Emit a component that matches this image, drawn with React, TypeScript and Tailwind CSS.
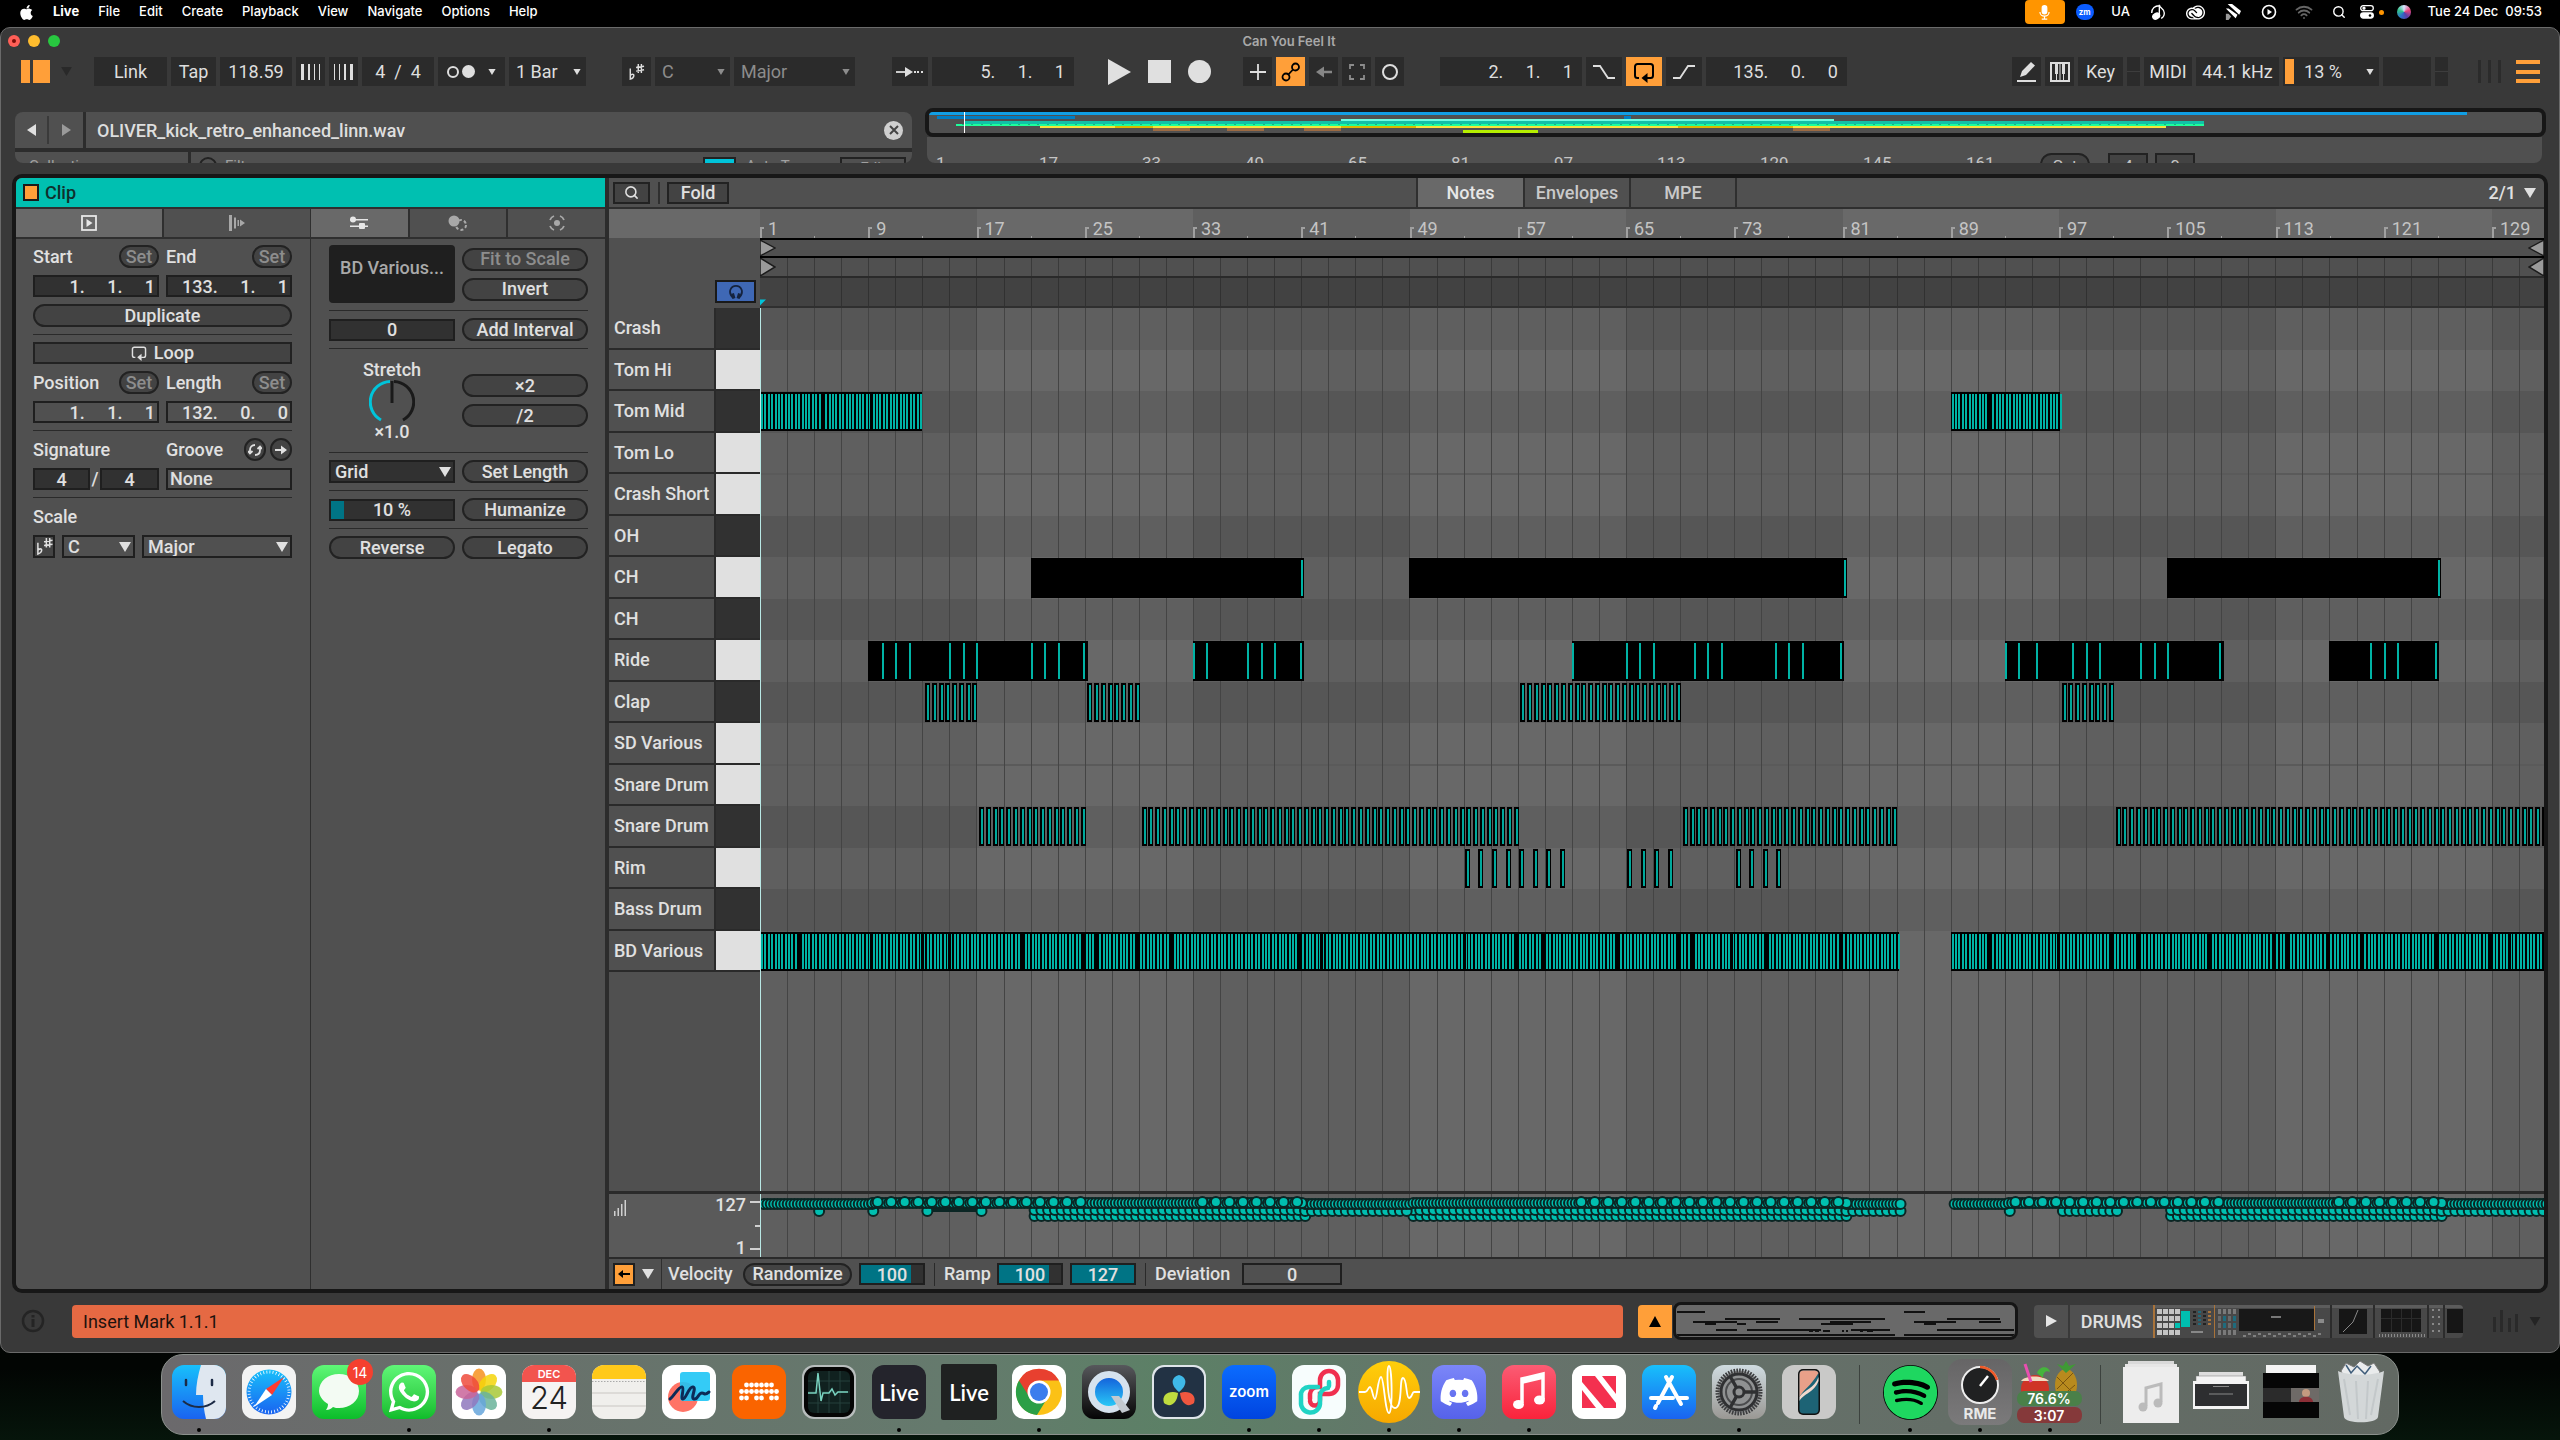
import React from "react";
import { Search, Wifi } from "lucide-react";
import { FaApple, FaDiscord, FaSpotify, FaWhatsapp } from "react-icons/fa";
import { SiAdobecreativecloud } from "react-icons/si";

/* ---------- shared geometry of the piano roll ---------- */

const BAR = 13.53;
const ROLL_W = 1784;
const ROW_H = 41.5;
const TEAL = "#00bfb0";
const barX = (bar: number) => (bar - 1) * BAR;

const PADS = [
  { name: "Crash", white: false },
  { name: "Tom Hi", white: true },
  { name: "Tom Mid", white: false },
  { name: "Tom Lo", white: true },
  { name: "Crash Short", white: true },
  { name: "OH", white: false },
  { name: "CH", white: true },
  { name: "CH", white: false },
  { name: "Ride", white: true },
  { name: "Clap", white: false },
  { name: "SD Various", white: true },
  { name: "Snare Drum", white: true },
  { name: "Snare Drum", white: false },
  { name: "Rim", white: true },
  { name: "Bass Drum", white: false },
  { name: "BD Various", white: true },
];

const BLOCKS = Array.from({ length: 9 }, (_, i) => i);
const LINES = Array.from({ length: 65 }, (_, i) => 1 + (i + 1) * 2);

function Shades({ y, height, light, dark }: { y: number; height: number; light: string; dark: string }) {
  return (
    <>
      {BLOCKS.map((b) => (
        <rect key={b} x={b * 16 * BAR} y={y} width={16 * BAR + 1} height={height} fill={b % 2 ? light : dark} />
      ))}
    </>
  );
}

function GridLines({ height, color = "#444444" }: { height: number; color?: string }) {
  return (
    <>
      {LINES.map((bar) => (
        <rect key={bar} x={Math.round(barX(bar))} y={0} width={1} height={height} fill={color} />
      ))}
    </>
  );
}

function DenseNotes({ row, from, to, gaps = [] }: { row: number; from: number; to: number; gaps?: number[] }) {
  const y = row * ROW_H + 1;
  const notes: number[] = [];
  for (let b = from; b < to - 0.05; b += 0.25) notes.push(b);
  return (
    <g>
      <rect x={barX(from)} y={y} width={(to - from) * BAR} height={39} fill="#000" />
      {notes.map((b) => (
        <rect key={b} x={Math.round(barX(b)) + 1} y={y + 2} width={2} height={35} fill="#00b3a5" />
      ))}
      {gaps.map((b) => (
        <rect key={b} x={Math.round(barX(b)) - 1} y={y} width={3} height={39} fill="#000" />
      ))}
    </g>
  );
}

function SolidNotes({ row, from, to, marks }: { row: number; from: number; to: number; marks: number[] }) {
  const y = row * ROW_H + 1;
  return (
    <g>
      <rect x={barX(from)} y={y} width={(to - from) * BAR + 3} height={40} fill="#000" />
      {marks.map((b) => (
        <rect key={b} x={Math.round(barX(b))} y={y + 2} width={2} height={36} fill="#00b3a5" />
      ))}
    </g>
  );
}

function StepNotes({ row, starts }: { row: number; starts: number[] }) {
  const y = row * ROW_H + 1;
  return (
    <g>
      {starts.map((b) => (
        <g key={b}>
          <rect x={Math.round(barX(b))} y={y} width={5} height={39} fill="#000" />
          <rect x={Math.round(barX(b)) + 2} y={y + 2} width={2} height={35} fill="#00a89b" />
        </g>
      ))}
    </g>
  );
}

const steps = (from: number, to: number, by = 0.5) => {
  const out: number[] = [];
  for (let b = from; b < to - 0.1; b += by) out.push(b);
  return out;
};

const KICK_GAPS_A = [3.9, 9.2, 13, 15, 20.4, 24.9, 25.8, 28.9, 31.4, 40.9, 42.5, 53, 56.9, 58.9, 64.4, 68.9, 69.8, 72.8, 75.4, 80.9];
const KICK_GAPS_B = [91.9, 96.9, 100.9, 102.9, 108.1, 112.9, 113.9, 116.8, 119.3, 124.9, 128.8, 130.3];

function NoteGrid() {
  return (
    <svg className="block h-[664px] w-full" viewBox={`0 0 ${ROLL_W} 664`} preserveAspectRatio="none" shapeRendering="crispEdges">
      {PADS.map((p, i) => (
        <Shades key={i} y={i * ROW_H} height={ROW_H + 1} light={p.white ? "#686868" : "#5f5f5f"} dark={p.white ? "#5f5f5f" : "#565656"} />
      ))}
      <rect x={0} y={4 * ROW_H - 1} width={ROLL_W} height={2} fill="#5a5a5a" />
      <rect x={0} y={11 * ROW_H - 1} width={ROLL_W} height={2} fill="#5a5a5a" />
      <GridLines height={664} />
      <DenseNotes row={2} from={1} to={13} gaps={[5.6, 9.2]} />
      <DenseNotes row={2} from={89} to={97.1} gaps={[91.9]} />
      <SolidNotes row={6} from={21} to={41} marks={[41]} />
      <SolidNotes row={6} from={49} to={81.1} marks={[81.1]} />
      <SolidNotes row={6} from={105} to={125} marks={[125]} />
      <SolidNotes row={8} from={9} to={25} marks={[10, 11, 12, 15, 16, 17, 21, 22, 23, 24.9]} />
      <SolidNotes row={8} from={33} to={41} marks={[33, 34, 37, 38, 39, 40.9]} />
      <SolidNotes row={8} from={61} to={80.9} marks={[61, 65, 66, 67, 70, 71, 72, 76, 77, 78, 80.8]} />
      <SolidNotes row={8} from={93} to={109} marks={[93, 94, 95.3, 98, 99, 100, 103, 104, 105, 108.8]} />
      <SolidNotes row={8} from={117} to={124.9} marks={[120, 121, 122, 124.8]} />
      <StepNotes row={9} starts={steps(13.2, 17)} />
      <StepNotes row={9} starts={steps(25.2, 29)} />
      <StepNotes row={9} starts={steps(57.2, 69)} />
      <StepNotes row={9} starts={steps(97.2, 101)} />
      <StepNotes row={12} starts={steps(17.2, 25)} />
      <StepNotes row={12} starts={steps(29.2, 57)} />
      <StepNotes row={12} starts={steps(69.2, 85)} />
      <StepNotes row={12} starts={steps(101.2, 133)} />
      <StepNotes row={13} starts={steps(53.1, 61, 1)} />
      <StepNotes row={13} starts={steps(65.1, 69, 1)} />
      <StepNotes row={13} starts={steps(73.1, 77, 1)} />
      <DenseNotes row={15} from={1} to={85.2} gaps={KICK_GAPS_A} />
      <DenseNotes row={15} from={89} to={133} gaps={KICK_GAPS_B} />
      <rect x={0} y={0} width={1} height={664} fill="#b9e8e5" />
    </svg>
  );
}

/* ---------- velocity lane ---------- */

function Dots({ from, to, by, cy, r = 5 }: { from: number; to: number; by: number; cy: number; r?: number }) {
  return (
    <>
      {steps(from, to, by).map((b) => (
        <circle key={b} cx={barX(b) + 4} cy={cy} r={r} fill={TEAL} stroke="#0b2624" strokeWidth={2} />
      ))}
    </>
  );
}

function VelocityLane() {
  return (
    <svg className="block h-[63px] w-full" viewBox={`0 0 ${ROLL_W} 63`} preserveAspectRatio="none">
      <Shades y={0} height={63} light="#686868" dark="#5f5f5f" />
      <g shapeRendering="crispEdges">
        <GridLines height={63} />
      </g>
      <Dots from={21} to={41.2} by={0.5} cy={22} r={5} />
      <Dots from={49} to={81.2} by={0.5} cy={22} r={5} />
      <Dots from={105} to={125.2} by={0.5} cy={22} r={5} />
      <Dots from={21} to={41.2} by={0.5} cy={16} r={5} />
      <Dots from={49} to={81.2} by={0.5} cy={16} r={5} />
      <Dots from={105} to={125.2} by={0.5} cy={16} r={5} />
      <Dots from={41} to={49} by={0.5} cy={17} r={5} />
      <Dots from={81} to={85.2} by={0.5} cy={17} r={5} />
      <Dots from={97} to={101.3} by={0.5} cy={17} r={5} />
      <Dots from={125} to={133} by={0.5} cy={17} r={5} />
      <rect x={barX(13.5)} y={13} width={3.5 * BAR} height={5} fill="#0b2624" />
      {[5, 9, 13, 17, 93].map((b) => (
        <circle key={b} cx={barX(b) + 5} cy={17} r={5} fill={TEAL} stroke="#0b2624" strokeWidth={2} />
      ))}
      <Dots from={1} to={9.2} by={0.25} cy={10} />
      <Dots from={41} to={49} by={0.25} cy={10} />
      <Dots from={81} to={85.3} by={0.25} cy={10} />
      <Dots from={89} to={93} by={0.25} cy={10} />
      <Dots from={125} to={133} by={0.25} cy={10} />
      {[
        [9, 41],
        [49, 81.3],
        [93, 125.2],
      ].map(([a, b]) => (
        <Dots key={a} from={a} to={b} by={0.25} cy={9} r={5} />
      ))}
      {[
        [9.4, 25.3],
        [33.4, 41.2],
        [61.4, 81.2],
        [93.5, 109.3],
        [117.4, 125.2],
      ].map(([a, b]) => (
        <Dots key={a} from={a} to={b} by={1} cy={8} r={5} />
      ))}
      <rect x={0} y={0} width={1} height={63} fill="#b9e8e5" />
    </svg>
  );
}

/* ---------- small controls ---------- */

function Pill({ children, dim, className = "" }: { children: React.ReactNode; dim?: boolean; className?: string }) {
  return (
    <button
      className={`flex h-[23px] min-w-0 items-center justify-center rounded-full border-2 border-[#222222] bg-[#434343] leading-none whitespace-nowrap ${dim ? "text-[#8d8d8d]" : "text-[#e0e0e0]"} ${className}`}
    >
      {children}
    </button>
  );
}

function Field({ label, value, className = "" }: { label: string; value: string; className?: string }) {
  return (
    <input
      aria-label={label}
      defaultValue={value}
      className={`h-[22px] min-w-0 border-2 border-[#1f1f1f] leading-none text-[#e0e0e0] outline-none ${className}`}
    />
  );
}

function Triangle({ className = "" }: { className?: string }) {
  return (
    <svg viewBox="0 0 12 10" className={`pointer-events-none ${className}`}>
      <path d="M0 0h12L6 10z" fill="currentColor" />
    </svg>
  );
}

function Choice({ label, value, className = "", box = "" }: { label: string; value: string; className?: string; box?: string }) {
  return (
    <div className={`relative min-w-0 ${box}`}>
      <select aria-label={label} className={`block h-[23px] w-full appearance-none border-2 border-[#1f1f1f] pl-1 leading-none text-[#e0e0e0] outline-none ${className}`}>
        <option>{value}</option>
      </select>
      <Triangle className="absolute top-[7px] right-[4px] h-[10px] w-[12px] text-[#e0e0e0]" />
    </div>
  );
}

const Rule = () => <div className="h-px w-full bg-[#2a2a2a]" />;

function FlatSharp({ className = "" }: { className?: string }) {
  return (
    <svg viewBox="0 0 18 18" className={className} fill="none" stroke="currentColor" strokeWidth={1.6}>
      <path d="M2 5v12c3-1 4-2.500 4-4.200S3.500 11 2 13M11 0v10M14.500 0v10M8.500 4l9-1.500M8.500 8l9-1.500" />
    </svg>
  );
}

function LoopIcon({ className = "" }: { className?: string }) {
  return (
    <svg viewBox="0 0 22 22" className={className} fill="none" stroke="currentColor" strokeWidth={2}>
      <path d="M6 17H4.500A2.500 2.500 0 0 1 2 14.500v-9A2.500 2.500 0 0 1 4.500 3h13A2.500 2.500 0 0 1 20 5.500v9a2.500 2.500 0 0 1-2.500 2.500H14" />
      <path d="M14.500 12v10L8.500 17z" fill="currentColor" stroke="none" />
    </svg>
  );
}

/* ---------- macOS menu bar ---------- */

function MenuBar() {
  return (
    <header className="flex h-[27px] items-start bg-black text-[13px] text-white [font-family:Inter,sans-serif]">
      <nav className="flex h-6 items-center gap-[19px] pl-[19px]">
        <FaApple className="h-[17px] w-[15px]" />
        <b className="font-bold">Live</b>
        {["File", "Edit", "Create", "Playback", "View", "Navigate", "Options", "Help"].map((m) => (
          <a key={m} href="#" className="font-medium">
            {m}
          </a>
        ))}
      </nav>
      <div className="ml-auto flex h-6 items-center">
        <span className="flex h-6 w-10 items-center justify-center rounded bg-[#ff9500]">
          <svg viewBox="0 0 12 16" className="h-[15px] w-[11px]" fill="none" stroke="white" strokeWidth={1.3}>
            <rect x="3.500" y="0.500" width="5" height="9" rx="2.500" fill="white" />
            <path d="M1 7.500a5 4.500 0 0 0 10 0M6 12v3M3 15.300h6" />
          </svg>
        </span>
        <span className="ml-[2px] flex w-9 justify-center">
          <span className="flex h-4 w-[18px] items-center justify-center rounded-full bg-[#0b5cff] text-[8px] font-bold">zm</span>
        </span>
        <span className="w-9 text-center font-medium">UA</span>
        <span className="flex w-[38px] justify-center">
          <svg viewBox="0 0 20 20" className="h-[18px] w-[18px]" fill="none" stroke="white" strokeWidth={1.500}>
            <ellipse cx="8" cy="14.500" rx="4" ry="3" fill="white" transform="rotate(-30 8 14.500)" />
            <path d="M11.500 13V2c0 4 5.500 4 5.500 9 0 3-1.500 5-3.500 6M3 11C3 6 7 3 11 3" />
          </svg>
        </span>
        <span className="flex w-[38px] justify-center">
          <SiAdobecreativecloud className="h-[19px] w-[21px]" />
        </span>
        <span className="flex w-9 justify-center">
          <svg viewBox="0 0 18 18" className="h-4 w-[18px]" fill="white">
            <path d="M3 0h5l10 8-2 4z" />
            <path d="M1 5h3l10 7-2 4z" />
            <path d="M1 11h3l3 3-3 4H1z" opacity=".6" />
          </svg>
        </span>
        <span className="flex w-9 justify-center">
          <svg viewBox="0 0 16 16" className="h-4 w-4" fill="none" stroke="white" strokeWidth={1.600}>
            <circle cx="8" cy="8" r="6.500" />
            <path d="M6.500 5v6L11 8z" fill="white" stroke="none" />
          </svg>
        </span>
        <span className="flex w-[34px] justify-center">
          <Wifi className="h-[18px] w-[18px] text-[#666]" strokeWidth={2.500} />
        </span>
        <span className="flex w-9 justify-center">
          <Search className="h-[14px] w-[14px]" strokeWidth={2.400} />
        </span>
        <span className="flex w-[30px] items-center justify-center gap-[5px]">
          <svg viewBox="0 0 14 14" className="h-[14px] w-[14px]" fill="none" stroke="white" strokeWidth={1.300}>
            <rect x="0.700" y="0.700" width="12.600" height="5" rx="2.500" />
            <circle cx="4" cy="3.200" r="1" fill="white" />
            <rect x="0.700" y="8" width="12.600" height="5" rx="2.500" fill="white" />
            <circle cx="10" cy="10.500" r="1.300" fill="black" stroke="none" />
          </svg>
          <i className="h-[5px] w-[5px] rounded-full bg-[#ff9500]" />
        </span>
        <span className="flex w-[34px] justify-center">
          <i className="h-[14px] w-[14px] rounded-full bg-[conic-gradient(#d6e4ff,#e8467c,#5b3ea8,#2a72c8,#35c48d,#d6e4ff)]" />
        </span>
        <time className="pr-[18px] pl-[7px] font-medium whitespace-pre">Tue 24 Dec  09:53</time>
      </div>
    </header>
  );
}

/* ---------- transport ---------- */

const cell = "flex h-[29px] items-center justify-center bg-[#2b2b2b] text-[#dedede] whitespace-pre";

function Bars({ widths }: { widths: number[] }) {
  return (
    <span className="flex h-4 items-stretch gap-[4px]">
      {widths.map((w, i) => (
        <i key={i} className="bg-[#dedede]" style={{ width: w }} />
      ))}
    </span>
  );
}

function ToolSelect({ label, value, box, dim }: { label: string; value: string; box: string; dim?: boolean }) {
  return (
    <div className={`relative ${box}`}>
      <select aria-label={label} className={`block h-[29px] w-full appearance-none bg-[#2b2b2b] pl-[7px] outline-none ${dim ? "text-[#8c8c8c]" : "text-[#dedede]"}`}>
        <option>{value}</option>
      </select>
      <Triangle className={`absolute top-[12px] right-[5px] h-[6px] w-[8px] ${dim ? "text-[#8c8c8c]" : "text-[#dedede]"}`} />
    </div>
  );
}

function Transport() {
  const stroke = { fill: "none", stroke: "currentColor", strokeWidth: 1.8 };
  return (
    <div className="flex h-[29px] items-center pr-[19px] pl-[20px] text-[18px]">
      <button aria-label="Browser" className="flex h-[23px] w-[29px] gap-[3px]">
        <i className="w-[9px] bg-[#ff9f39]" />
        <i className="flex-1 bg-[#ff9f39]" />
      </button>
      <Triangle className="ml-[11px] h-[9px] w-[11px] text-[#292929]" />
      <div className="ml-[22px] flex gap-1">
        <button className={`${cell} w-[73px]`}>Link</button>
        <button className={`${cell} w-[45px]`}>Tap</button>
        <input aria-label="Tempo" defaultValue="118.59" className="h-[29px] w-[72px] bg-[#2b2b2b] text-center text-[#dedede]" />
        <button aria-label="Nudge down" className={`${cell} w-[29px]`}>
          <Bars widths={[3, 2, 1, 1]} />
        </button>
        <button aria-label="Nudge up" className={`${cell} w-[29px]`}>
          <Bars widths={[1, 1, 2, 3]} />
        </button>
        <input aria-label="Time signature" defaultValue="4  /  4" className="h-[29px] w-[72px] bg-[#2b2b2b] text-center text-[#dedede]" />
        <button aria-label="Metronome" className={`${cell} w-[67px] gap-[3px]`}>
          <i className="h-[12px] w-[12px] rounded-full border-2 border-[#dedede]" />
          <i className="h-[13px] w-[13px] rounded-full bg-[#dedede]" />
          <Triangle className="ml-[10px] h-[6px] w-[8px]" />
        </button>
        <ToolSelect label="Quantization" value="1 Bar" box="w-[77px]" />
      </div>
      <div className="ml-[36px] flex gap-1">
        <button aria-label="Scale mode" className={`${cell} w-[29px]`}>
          <FlatSharp className="h-4 w-[17px]" />
        </button>
        <ToolSelect label="Root note" value="C" box="w-[75px]" dim />
        <ToolSelect label="Scale name" value="Major" box="w-[121px]" dim />
      </div>
      <div className="ml-[37px] flex items-center gap-1">
        <button aria-label="Follow" className={`${cell} w-[36px]`}>
          <svg viewBox="0 0 28 14" className="h-[14px] w-7">
            <path d="M0 7h10" {...stroke} />
            <path d="M9 2l8 5-8 5z" fill="currentColor" />
            <path d="M18 7h2M21 7h2M25 7h2" {...stroke} />
          </svg>
        </button>
        <input aria-label="Arrangement position" defaultValue="5.     1.     1" className="h-[29px] w-[142px] bg-[#2b2b2b] pr-[9px] text-right text-[#dedede]" />
        <button aria-label="Play" className="ml-[30px]">
          <svg viewBox="0 0 23 26" className="h-[26px] w-[23px]">
            <path d="M0 0l23 13L0 26z" fill="#e0e0e0" />
          </svg>
        </button>
        <button aria-label="Stop" className="ml-[13px] h-[23px] w-[23px] bg-[#e0e0e0]" />
        <button aria-label="Record" className="ml-[13px] h-[23px] w-[23px] rounded-full bg-[#e0e0e0]" />
      </div>
      <div className="ml-[32px] flex gap-1">
        <button aria-label="Overdub" className={`${cell} w-[29px]`}>
          <svg viewBox="0 0 16 16" className="h-4 w-4">
            <path d="M8 0v16M0 8h16" {...stroke} />
          </svg>
        </button>
        <button aria-label="Automation arm" className="flex h-[29px] w-[29px] items-center justify-center bg-[#ff9f39] text-black">
          <svg viewBox="0 0 20 20" className="h-5 w-5">
            <circle cx="14.500" cy="5" r="3.500" {...stroke} />
            <circle cx="5" cy="15" r="3.500" {...stroke} />
            <path d="M12 7.500l-4.600 5" {...stroke} />
          </svg>
        </button>
        <button aria-label="Re-enable automation" className={`${cell} w-[29px]`}>
          <svg viewBox="0 0 16 12" className="h-3 w-4 text-[#868686]">
            <path d="M0 6l8-5.500v11z" fill="currentColor" />
            <path d="M6 6h10" stroke="currentColor" strokeWidth={2.500} />
          </svg>
        </button>
        <button aria-label="Capture" className={`${cell} w-[29px]`}>
          <svg viewBox="0 0 16 16" className="h-4 w-4 text-[#8c8c8c]">
            <path d="M1 5V1h4M11 1h4v4M15 11v4h-4M5 15H1v-4" {...stroke} />
          </svg>
        </button>
        <button aria-label="Session record" className={`${cell} w-[29px]`}>
          <i className="h-4 w-4 rounded-full border-2 border-[#dedede]" />
        </button>
      </div>
      <div className="ml-[36px] flex gap-1">
        <input aria-label="Loop start" defaultValue="2.     1.     1" className="h-[29px] w-[142px] bg-[#2b2b2b] pr-[9px] text-right text-[#dedede]" />
        <button aria-label="Punch in" className={`${cell} w-[36px]`}>
          <svg viewBox="0 0 24 14" className="h-[14px] w-6">
            <path d="M1 1h7l8 12h7" {...stroke} />
          </svg>
        </button>
        <button aria-label="Loop switch" className="flex h-[29px] w-[36px] items-center justify-center bg-[#ff9f39] text-black">
          <LoopIcon className="h-[22px] w-6" />
        </button>
        <button aria-label="Punch out" className={`${cell} w-[36px]`}>
          <svg viewBox="0 0 24 14" className="h-[14px] w-6">
            <path d="M1 13h7l8-12h7" {...stroke} />
          </svg>
        </button>
        <input aria-label="Loop length" defaultValue="135.     0.     0" className="h-[29px] w-[141px] bg-[#2b2b2b] pr-[9px] text-right text-[#dedede]" />
      </div>
      <div className="ml-auto flex gap-1">
        <button aria-label="Draw mode" className={`${cell} w-[29px]`}>
          <svg viewBox="0 0 20 20" className="h-5 w-5" fill="currentColor">
            <path d="M3 15l2-6 9-9 4 3.500-9 9.500zM0 18h19v2H0z" />
          </svg>
        </button>
        <button aria-label="Computer MIDI keyboard" className={`${cell} w-[29px]`}>
          <svg viewBox="0 0 20 20" className="h-5 w-5">
            <rect x="1" y="1" width="18" height="18" fill="none" stroke="currentColor" strokeWidth={2} />
            <path d="M5 1h3v11H5zM12 1h3v11h-3z" fill="currentColor" />
            <path d="M6.500 12v7M13.500 12v7M10 1v18" stroke="currentColor" />
          </svg>
        </button>
        <button className={`${cell} w-[45px]`}>Key</button>
        <span className={`${cell} w-[13px] flex-col`}>
          <i className="h-px w-full bg-[#3d3d3d]" />
        </span>
        <button className={`${cell} w-[48px]`}>MIDI</button>
        <button className={`${cell} w-[83px]`}>44.1 kHz</button>
        <div className={`${cell} relative w-[96px] pr-4`}>
          <i className="absolute top-[2px] left-[2px] h-[25px] w-[9px] bg-[#ff9f39]" />
          13 %
          <Triangle className="absolute top-[12px] right-[5px] h-[6px] w-[8px]" />
        </div>
        <span className={`${cell} w-[48px]`} />
        <span className={`${cell} w-[13px] flex-col`}>
          <i className="h-px w-full bg-[#3d3d3d]" />
        </span>
      </div>
      <div className="ml-[30px] flex h-[23px] gap-[7px]">
        <i className="w-[3px] bg-[#2b2b2b]" />
        <i className="w-[3px] bg-[#2b2b2b]" />
        <i className="w-[3px] bg-[#2b2b2b]" />
      </div>
      <button aria-label="Views" className="ml-[15px] flex h-[23px] w-[24px] flex-col justify-between">
        <i className="h-1 w-full bg-[#ff9f39]" />
        <i className="h-1 w-full bg-[#ff9f39]" />
        <i className="h-1 w-full bg-[#ff9f39]" />
      </button>
    </div>
  );
}

/* ---------- browser strip and arrangement overview ---------- */

function BrowserStrip() {
  return (
    <section className="mt-[4px] h-[51px] w-[897px] shrink-0 overflow-hidden rounded-lg bg-[#505050] text-[18px]">
      <div className="flex h-[40px] items-center border-b-4 border-[#2c2c2c]">
        <div className="flex h-full items-center border-r-3 border-[#2c2c2c]">
          <button aria-label="Back" className="flex h-7 w-[34px] items-center justify-center border-r-2 border-[#3a3a3a]">
            <svg viewBox="0 0 9 12" className="h-3 w-[9px]">
              <path d="M9 0v12L0 6z" fill="#e0e0e0" />
            </svg>
          </button>
          <button aria-label="Forward" className="flex w-[34px] justify-center">
            <svg viewBox="0 0 9 12" className="h-3 w-[9px]">
              <path d="M0 0v12l9-6z" fill="#9a9a9a" />
            </svg>
          </button>
        </div>
        <input aria-label="Search browser" defaultValue="OLIVER_kick_retro_enhanced_linn.wav" className="h-full flex-1 bg-transparent pl-[11px] font-medium text-[#dedede] outline-none" />
        <button aria-label="Clear search" className="mr-[9px] flex h-[19px] w-[19px] items-center justify-center rounded-full bg-[#cfcfcf]">
          <svg viewBox="0 0 10 10" className="h-[10px] w-[10px]">
            <path d="M1 1l8 8M9 1L1 9" stroke="#444" strokeWidth={2} />
          </svg>
        </button>
      </div>
      <div className="flex text-[15px] leading-[18px] text-[#a0a0a0]">
        <span className="w-[173px] pt-[5px] pl-[14px]">Collections</span>
        <span className="h-5 w-[3px] bg-[#2c2c2c]" />
        <i className="mt-[5px] ml-[8px] h-[18px] w-[18px] rounded-full border-2 border-[#222222]" />
        <span className="pt-[5px] pl-[8px]">Filters</span>
        <i className="mt-[5px] ml-auto h-5 w-[33px] border-2 border-[#222222] bg-[#00c4da]" />
        <span className="w-[104px] pt-[5px] pl-[10px]">Auto Tags</span>
        <span className="mt-[5px] mr-[6px] h-5 w-[66px] border-2 border-[#222222] text-center">Edit</span>
      </div>
    </section>
  );
}

function Overview() {
  const clip = (x1: number, x2: number, y: number, h: number, fill: string) => (
    <rect key={`${x1}-${y}`} x={x1 - 929} y={y} width={x2 - x1} height={h} fill={fill} />
  );
  return (
    <section className="ml-[13px] min-w-0 flex-1">
      <div className="h-[29px] overflow-hidden rounded-lg border-4 border-[#171717] bg-[#505050]">
        <svg className="block h-[21px] w-full" viewBox="0 0 1614 21" preserveAspectRatio="none" shapeRendering="crispEdges">
          {clip(929, 2468, 0, 3, "#119ee4")}
          {clip(937, 1075, 4, 3, "#007ec4")}
          {clip(1624, 1631, 4, 3, "#007ec4")}
          {clip(965, 2205, 9, 3, "#12c0a8")}
          {clip(1341, 1835, 7, 2, "#6dfce0")}
          {clip(956, 2205, 12, 2, "#1cff9c")}
          {Array.from({ length: 132 }, (_, i) => clip(962 + i * 9.4, 964 + i * 9.4, 12, 1, "#16b97c"))}
          {clip(1040, 2167, 14, 2, "#f7e33b")}
          {clip(1115, 1153, 14, 2, "#d9b800")}
          {clip(1341, 1416, 14, 2, "#d9b800")}
          {clip(1678, 1794, 14, 2, "#d9b800")}
          {[1153, 1227, 1304, 1794].map((x) => clip(x, x + 37, 16, 3, "#9c6a43"))}
          {clip(1463, 1538, 18, 3, "#b6ef00")}
          {clip(964, 965, 0, 21, "#ffffff")}
        </svg>
      </div>
      <div className="mr-1 ml-[2px] flex h-[26px] overflow-hidden rounded-b-lg bg-[#505050] pt-[15px] text-[17px] leading-[22px] text-[#c4c4c4]">
        <span className="flex shrink-0 pl-[9px]">
          {["1", "17", "33", "49", "65", "81", "97", "113", "129", "145"].map((n) => (
            <span key={n} className="w-[103px]">
              {n}
            </span>
          ))}
          <span className="w-[74px]">161</span>
        </span>
        <span className="mt-px h-[23px] w-[50px] shrink-0 rounded-full border-2 border-[#222222] bg-[#434343] text-center">Set</span>
        <span className="mt-px ml-[18px] h-[23px] w-[40px] shrink-0 border-2 border-[#222222] bg-[#434343] text-center">4</span>
        <span className="mt-px ml-[7px] h-[23px] w-[40px] shrink-0 border-2 border-[#222222] bg-[#434343] text-center">0</span>
      </div>
    </section>
  );
}

/* ---------- clip panels ---------- */

const tab = "flex h-7 flex-1 items-center justify-center";
const inv = "bg-[#505050] text-[#a8a8a8]";
const act = "bg-[#696969] text-[#e6e6e6]";

function PairLabels({ a, b }: { a: string; b: string }) {
  return (
    <div className="flex gap-[7px] leading-none">
      {[a, b].map((t) => (
        <div key={t} className="flex h-[23px] w-[126px] items-center justify-between">
          {t}
          <Pill dim className="w-[40px]">
            Set
          </Pill>
        </div>
      ))}
    </div>
  );
}

function ClipColumn() {
  return (
    <div className="flex w-[294px] shrink-0 flex-col">
      <div className="flex gap-[2px] border-b-2 border-[#2f2f2f] bg-[#2f2f2f]">
        <button aria-label="Clip content" className={`${tab} ${act}`}>
          <svg viewBox="0 0 16 16" className="h-4 w-4">
            <rect x="1" y="1" width="14" height="14" fill="none" stroke="currentColor" strokeWidth={1.800} />
            <path d="M5.500 4v8l6-4z" fill="currentColor" />
          </svg>
        </button>
        <button aria-label="Launch" className={`${tab} ${inv}`}>
          <svg viewBox="0 0 16 16" className="h-4 w-4" fill="currentColor">
            <path d="M0 0h3v16H0zM5 2.500h2v11H5zM8.500 5h1.500v6H8.500zM11 4.500v7L16 8z" />
          </svg>
        </button>
      </div>
      <div className="flex flex-col gap-[7px] pt-[6px] pr-[18px] pl-[17px]">
        <PairLabels a="Start" b="End" />
        <div className="flex gap-[7px]">
          <Field label="Start" value="1.     1.     1" className="w-[126px] bg-[#313131] pr-[2px] text-right" />
          <Field label="End" value="133.     1.     1" className="w-[126px] bg-[#313131] pr-[2px] text-right" />
        </div>
        <Pill className="w-full">Duplicate</Pill>
        <Rule />
        <button className="flex h-[22px] items-center justify-center gap-[7px] border-2 border-[#222222] bg-[#434343] leading-none">
          <LoopIcon className="h-4 w-4" />
          Loop
        </button>
        <PairLabels a="Position" b="Length" />
        <div className="flex gap-[7px]">
          <Field label="Position" value="1.     1.     1" className="w-[126px] bg-[#505050] pr-[2px] text-right" />
          <Field label="Length" value="132.     0.     0" className="w-[126px] bg-[#505050] pr-[2px] text-right" />
        </div>
        <Rule />
        <div className="flex h-[23px] items-center leading-none">
          <span className="w-[133px]">Signature</span>
          <span className="flex-1">Groove</span>
          <button aria-label="Hot-swap groove" className="mr-1 flex h-[23px] w-[22px] items-center justify-center rounded-full border-2 border-[#222222] bg-[#434343]">
            <svg viewBox="0 0 14 14" className="h-[14px] w-[14px]" fill="none" stroke="currentColor" strokeWidth={1.800}>
              <path d="M7 2C4 2 2 4 2 7v2M7 12c3 0 5-2 5-5V5M0 8l2 2.500L4.500 8M9.500 6L12 3.500 14 6" />
            </svg>
          </button>
          <button aria-label="Commit groove" className="flex h-[23px] w-[22px] items-center justify-center rounded-full border-2 border-[#222222] bg-[#434343]">
            <svg viewBox="0 0 12 12" className="h-3 w-3" fill="currentColor">
              <path d="M0 5h6V1.500L12 6l-6 4.500V7H0z" />
            </svg>
          </button>
        </div>
        <div className="flex items-center">
          <Field label="Signature numerator" value="4" className="w-[57px] bg-[#313131] text-center" />
          <span className="w-[10px] text-center leading-none">/</span>
          <Field label="Signature denominator" value="4" className="w-[59px] bg-[#313131] text-center" />
          <select aria-label="Groove" className="ml-[7px] block h-[22px] w-[126px] appearance-none border-2 border-[#1f1f1f] bg-[#505050] pl-[2px] leading-none">
            <option>None</option>
          </select>
        </div>
        <Rule />
        <div className="flex h-[23px] items-center leading-none">Scale</div>
        <div className="flex gap-[7px]">
          <button aria-label="Scale highlight" className="flex h-[23px] w-[22px] items-center justify-center border-2 border-[#1f1f1f] bg-[#434343]">
            <FlatSharp className="h-[17px] w-[17px]" />
          </button>
          <Choice label="Root" value="C" box="w-[73px]" className="bg-[#505050]" />
          <Choice label="Scale" value="Major" box="flex-1" className="bg-[#505050]" />
        </div>
      </div>
    </div>
  );
}

const pair = "grid grid-cols-2 items-center gap-[7px]";

function ToolsColumn() {
  return (
    <div className="flex min-w-0 flex-1 flex-col">
      <div className="flex gap-[2px] border-b-2 border-[#2f2f2f] bg-[#2f2f2f]">
        <button aria-label="Pitch and time" className={`${tab} ${act}`}>
          <svg viewBox="0 0 18 14" className="h-[14px] w-[18px]" fill="currentColor">
            <path d="M0 3h18v1.500H0zM0 9.500h18V11H0z" />
            <circle cx="3" cy="3.500" r="3" />
            <rect x="9" y="7" width="6" height="6" rx="1" />
          </svg>
        </button>
        <button aria-label="Transform" className={`${tab} ${inv}`}>
          <svg viewBox="0 0 20 16" className="h-4 w-5">
            <circle cx="6" cy="6" r="5.500" fill="currentColor" />
            <circle cx="13" cy="10" r="5" fill="none" stroke="currentColor" strokeWidth={2} strokeDasharray="3 2.200" />
          </svg>
        </button>
        <button aria-label="Generate" className={`${tab} ${inv}`}>
          <svg viewBox="0 0 16 16" className="h-4 w-4" fill="none" stroke="currentColor" strokeWidth={1.800}>
            <circle cx="8" cy="8" r="3" fill="currentColor" stroke="none" />
            <path d="M1 5a7 7 0 0 1 4-4M11 1a7 7 0 0 1 4 4M15 11a7 7 0 0 1-4 4M5 15a7 7 0 0 1-4-4" />
          </svg>
        </button>
      </div>
      <div className="flex flex-col gap-[7px] pt-[6px] pr-[17px] pl-[18px]">
        <div className={pair}>
          <div className="flex h-[58px] items-center justify-center rounded bg-[#1f1f1f] pb-[12px] leading-none text-[#a9a9a9]">BD Various...</div>
          <div className="flex flex-col gap-[7px]">
            <Pill dim>Fit to Scale</Pill>
            <Pill>Invert</Pill>
          </div>
        </div>
        <Rule />
        <div className={pair}>
          <Field label="Interval" value="0" className="bg-[#313131] text-center" />
          <Pill>Add Interval</Pill>
        </div>
        <Rule />
        <div className={`${pair} h-[89px]`}>
          <div className="flex flex-col items-center leading-none">
            Stretch
            <svg viewBox="0 0 46 44" className="h-[44px] w-[46px]" fill="none" strokeWidth={3}>
              <path d="M12 41A20.500 20.500 0 0 1 21 2.500" stroke="#00c4da" />
              <path d="M25 2.500A20.500 20.500 0 0 1 34 41" stroke="#1a1a1a" />
              <path d="M23 2v22" stroke="#1a1a1a" />
            </svg>
            ×1.0
          </div>
          <div className="flex flex-col gap-[7px]">
            <Pill>×2</Pill>
            <Pill>/2</Pill>
          </div>
        </div>
        <Rule />
        <div className={pair}>
          <Choice label="Quantize to" value="Grid" className="bg-[#313131]" />
          <Pill>Set Length</Pill>
        </div>
        <Rule />
        <div className={pair}>
          <Field label="Humanize amount" value="10 %" className="bg-[linear-gradient(90deg,#007485_13px,#313131_13px)] text-center" />
          <Pill>Humanize</Pill>
        </div>
        <Rule />
        <div className={pair}>
          <Pill>Reverse</Pill>
          <Pill>Legato</Pill>
        </div>
      </div>
    </div>
  );
}

/* ---------- piano roll ---------- */

function LaneMarker({ flip }: { flip?: boolean }) {
  return (
    <svg viewBox="0 0 16 18" className={`relative h-full w-4 ${flip ? "-scale-x-100" : ""}`} preserveAspectRatio="none">
      <path d="M0 0l15 9-15 9z" fill="#9a9a9a" stroke="#1b1b1b" strokeWidth={1.500} />
    </svg>
  );
}

function ThinGrid({ height, line }: { height: number; line: string }) {
  return (
    <svg className="absolute inset-0 h-full w-full" viewBox={`0 0 ${ROLL_W} ${height}`} preserveAspectRatio="none" shapeRendering="crispEdges">
      <GridLines height={height} color={line} />
    </svg>
  );
}

function PianoRoll() {
  return (
    <section className="flex min-w-0 flex-1 flex-col">
      <div className="flex h-[31px] items-center border-b-2 border-[#2f2f2f] bg-[#505050]">
        <div className="flex flex-1 items-center">
          <button aria-label="Find notes" className="ml-1 flex h-[22px] w-[37px] items-center justify-center border-2 border-[#222222] bg-[#434343]">
            <Search className="h-[15px] w-[15px]" strokeWidth={2.500} />
          </button>
          <i className="ml-2 h-[22px] w-[2px] bg-[#2f2f2f]" />
          <button className="ml-[7px] h-[22px] w-[62px] border-2 border-[#222222] bg-[#434343] leading-none">Fold</button>
        </div>
        <div role="tablist" className="flex h-full border-x-2 border-[#2f2f2f]">
          <button role="tab" aria-selected="true" className="w-[105px] bg-[#696969] text-[#e6e6e6]">
            Notes
          </button>
          <button role="tab" className="w-[106px] border-l-2 border-[#2f2f2f] text-[#c9c9c9]">
            Envelopes
          </button>
          <button role="tab" className="w-[106px] border-l-2 border-[#2f2f2f] text-[#c9c9c9]">
            MPE
          </button>
        </div>
        <div className="flex flex-1 justify-end">
          <button className="flex items-center gap-2 pr-2">
            2/1
            <Triangle className="h-[10px] w-[12px]" />
          </button>
        </div>
      </div>

      {/* ruler */}
      <div className="flex h-[29px] bg-[#696969] text-[18px] font-normal text-[#c4c4c4]">
        <div className="w-[151px] shrink-0" />
        <div className="flex min-w-0 flex-1 overflow-hidden">
          {Array.from({ length: 17 }, (_, i) => (
            <div key={i} className={`relative flex w-[6.068%] shrink-0 items-end last:shrink ${Math.floor(i / 2) % 2 ? "bg-[#696969]" : "bg-[#5f5f5f]"}`}>
              <i className="h-[11px] w-1 shrink-0 border-t-2 border-l-2 border-[#a0a0a0]" />
              <span className="pl-1 leading-[19px]">{1 + i * 8}</span>
              {i < 16 && <i className="absolute bottom-0 left-1/2 h-[2px] w-px bg-[#a0a0a0]" />}
            </div>
          ))}
        </div>
      </div>

      {/* loop brace, markers and scrub strip */}
      <div className="flex h-[70px]">
        <div className="flex w-[151px] shrink-0 items-end justify-end bg-[#505050] pr-1 pb-[5px]">
          <button aria-label="Preview notes" className="flex h-[23px] w-[41px] items-center justify-center border-2 border-[#1a1a1a] bg-[#3f68b5]">
            <svg viewBox="0 0 16 16" className="h-4 w-4" fill="none" stroke="#15233f" strokeWidth={1.800}>
              <path d="M5.500 14C2 11 1.500 8 2.500 5.500a6 6 0 0 1 11 0C14.500 8 14 11 10.500 14" />
              <path d="M4.500 9.500l1.500 5M11.500 9.500l-1.500 5" strokeWidth={3} />
            </svg>
          </button>
        </div>
        <div className="flex min-w-0 flex-1 flex-col">
          <div className="flex h-[20px] justify-between border-y-2 border-black bg-[#505050]">
            <LaneMarker />
            <LaneMarker flip />
          </div>
          <div className="relative flex h-[20px] justify-between border-b-2 border-[#2a2a2a] bg-[#505050]">
            <ThinGrid height={20} line="#3a3a3a" />
            <LaneMarker />
            <LaneMarker flip />
          </div>
          <div className="relative flex flex-1 items-end border-b-2 border-[#2f2f2f] bg-[#424242]">
            <ThinGrid height={28} line="#313131" />
            <svg viewBox="0 0 6 6" className="relative h-[7px] w-[6px]">
              <path d="M0 0h6L0 6z" fill="#00c4da" />
            </svg>
          </div>
        </div>
      </div>

      {/* pads and notes */}
      <div className="flex h-[664px]">
        <ul className="flex w-[151px] shrink-0 flex-col">
          {PADS.map((p, i) => (
            <li key={i} className="flex flex-1 border-b-2 border-[#2a2a2a]">
              <span className="flex w-[107px] items-center border-r-2 border-[#2a2a2a] bg-[#505050] pl-[5px] whitespace-nowrap">{p.name}</span>
              <span className={`flex-1 ${p.white ? "bg-[#e0e0e0]" : "bg-[#313131]"}`} />
            </li>
          ))}
        </ul>
        <div className="min-w-0 flex-1">
          <NoteGrid />
        </div>
      </div>

      {/* empty octave range */}
      <div className="flex min-h-[40px] flex-1">
        <div className="w-[151px] shrink-0 bg-[#505050]" />
        <div className="relative min-w-0 flex-1">
          <svg className="absolute inset-0 h-full w-full" viewBox={`0 0 ${ROLL_W} 100`} preserveAspectRatio="none" shapeRendering="crispEdges">
            <Shades y={0} height={100} light="#686868" dark="#5f5f5f" />
            <GridLines height={100} />
            <rect x={0} y={0} width={1} height={100} fill="#b9e8e5" />
          </svg>
        </div>
      </div>

      {/* velocity lane */}
      <div className="flex h-[68px] border-t-3 border-b-2 border-[#2a2a2a]">
        <div className="flex w-[151px] shrink-0 bg-[#5a5a5a] pl-[5px] leading-none">
          <svg viewBox="0 0 12 16" className="mt-[6px] h-4 w-3" fill="#d0d0d0">
            <path d="M0 11h1.500v5H0zM3.500 8H5v8H3.500zM7 4h1.500v12H7zM10.500 0H12v16h-1.500z" />
          </svg>
          <div className="ml-auto flex flex-col justify-between pt-[2px] pr-1 text-right">
            <span>127</span>
            <span>1</span>
          </div>
          <div className="flex flex-col items-end justify-between py-[7px]">
            <i className="h-[2px] w-[10px] bg-[#d0d0d0]" />
            <i className="h-[2px] w-[5px] bg-[#d0d0d0]" />
            <i className="h-[2px] w-[10px] bg-[#d0d0d0]" />
          </div>
        </div>
        <div className="min-w-0 flex-1">
          <VelocityLane />
        </div>
      </div>

      {/* velocity tools */}
      <div className="flex h-[30px] items-center bg-[#505050] pl-1 leading-none">
        <button aria-label="Show lane" className="flex h-[23px] w-[22px] items-center justify-center border-2 border-[#1f1f1f] bg-[#ff9f39]">
          <svg viewBox="0 0 12 8" className="h-2 w-3">
            <path d="M0 4l5-4v8z" />
            <path d="M3 3h9v2H3z" />
          </svg>
        </button>
        <Triangle className="ml-[7px] h-[10px] w-[12px]" />
        <i className="ml-[7px] h-full w-px bg-[#2f2f2f]" />
        <span className="ml-[6px] w-[75px]">Velocity</span>
        <Pill className="w-[109px]">Randomize</Pill>
        <Field label="Randomize amount" value="100" className="ml-[7px] w-[66px] bg-[linear-gradient(90deg,#007485_80%,#313131_80%)] text-center" />
        <i className="mx-[9px] h-[23px] w-px bg-[#2a2a2a]" />
        <span className="w-[53px]">Ramp</span>
        <Field label="Ramp start" value="100" className="w-[66px] bg-[linear-gradient(90deg,#007485_80%,#313131_80%)] text-center" />
        <Field label="Ramp end" value="127" className="ml-[7px] w-[66px] bg-[#007485] text-center" />
        <i className="mx-[9px] h-[23px] w-px bg-[#2a2a2a]" />
        <span className="w-[87px]">Deviation</span>
        <Field label="Deviation" value="0" className="w-[100px] bg-[#505050] text-center" />
      </div>
    </section>
  );
}

/* ---------- status bar ---------- */

function ClipPreview() {
  const rows: [number, [number, number][]][] = [
    [391, [[184, 228], [538, 572]]],
    [412, [[258, 345], [375, 508], [605, 689]]],
    [422, [[209, 277], [307, 342], [422, 487], [554, 620], [655, 690]]],
    [428, [[228, 245], [278, 292], [408, 458], [569, 588]]],
    [444, [[245, 277], [293, 408], [456, 517], [590, 711]]],
    [449, [[390, 396], [400, 406], [412, 422], [441, 444], [448, 451], [469, 474], [480, 490]]],
    [459, [[184, 524], [538, 711]]],
  ];
  return (
    <svg viewBox="0 0 530 32" preserveAspectRatio="none" className="h-full w-full" shapeRendering="crispEdges">
      {rows.map(([y, segs]) => segs.map(([a, b]) => <rect key={`${y}-${a}`} x={a - 182} y={Math.round((y - 373) / 3)} width={b - a} height={2} fill="#111" />))}
    </svg>
  );
}

function DeviceChain() {
  const cells = Array.from({ length: 16 }, (_, i) => i);
  return (
    <svg viewBox="0 0 310 33" className="h-[33px] w-[310px] rounded-r" shapeRendering="crispEdges">
      <rect width="310" height="33" fill="#484848" />
      <rect width="310" height="3" fill="#5c5c5c" />
      <rect width="2" height="33" fill="#a9733a" />
      {cells.map((i) => (
        <rect key={i} x={4 + (i % 4) * 6} y={4 + Math.floor(i / 4) * 7} width="5" height="5" fill={i === 11 ? TEAL : "#c4c4c4"} />
      ))}
      <rect x="28" y="6" width="9" height="16" fill={TEAL} />
      {cells.map((i) => (
        <rect key={i} x={40 + (i % 4) * 5} y={6 + Math.floor(i / 4) * 4} width="3" height="2" fill={i % 4 === 3 ? "#a9733a" : i % 2 ? "#1f6b7d" : "#222"} />
      ))}
      <rect x="38" y="26" width="12" height="2" fill="#888" />
      <rect x="61" y="0" width="1" height="33" fill="#a9733a" />
      {cells.map((i) => (
        <rect key={i} x={65 + (i % 4) * 5} y={4 + Math.floor(i / 4) * 7} width="3" height="5" fill={i < 4 || i > 11 ? "#7a7a7a" : i % 2 ? "#1f6b7d" : "#6a6a6a"} />
      ))}
      <rect x="86" y="4" width="75" height="22" fill="#181818" />
      <rect x="118" y="11" width="10" height="2" fill="#777" />
      {cells.map((i) => (
        <rect key={i} x={90 + i * 5} y={i % 2 ? 28 : 30} width="3" height="2" fill="#7f7f7f" />
      ))}
      <rect x="161" y="1" width="1" height="24" fill="#a9733a" />
      <rect x="165" y="14" width="6" height="4" fill="#8a8a8a" />
      <path d="M178 0v33M221 0v33M275 0v33M291 0v33" stroke="#2c2c2c" strokeWidth="2" />
      <rect x="186" y="4" width="28" height="25" fill="#161616" />
      <path d="M190 27l10-10 5-12" stroke="#888" fill="none" shapeRendering="auto" />
      <rect x="228" y="4" width="40" height="23" fill="#161616" />
      <path d="M228 13h40M238 4v23M248 4v23M258 4v23" stroke="#2b2b2b" />
      {cells.map((i) => (
        <rect key={i} x={226 + i * 3} y="29" width="1" height="3" fill="#8a8a8a" />
      ))}
      {cells.slice(0, 8).map((i) => (
        <rect key={i} x={279 + (i % 2) * 6} y={4 + Math.floor(i / 2) * 7} width="2" height="2" fill="#888" />
      ))}
      <rect x="294" y="4" width="16" height="24" fill="#161616" />
    </svg>
  );
}

function StatusBar() {
  return (
    <footer className="flex h-[38px] items-center pr-[18px] pl-[20px]">
      <svg viewBox="0 0 24 24" className="h-6 w-6" fill="none" stroke="#242424" strokeWidth={2.500}>
        <circle cx="12" cy="12" r="10" />
        <path d="M12 10v8M12 6v2.500" strokeWidth={3} />
      </svg>
      <p className="ml-[27px] flex h-[33px] min-w-0 flex-1 items-center rounded bg-[#e56943] pl-[11px] text-[18px] text-[#1d120d]">Insert Mark 1.1.1</p>
      <button aria-label="Show clip view" className="ml-[15px] flex h-[33px] w-[34px] items-center justify-center rounded-l bg-[#ff9f39]">
        <svg viewBox="0 0 12 11" className="h-[11px] w-3">
          <path d="M6 0l6 11H0z" />
        </svg>
      </button>
      <div className="ml-px h-[38px] w-[345px] overflow-hidden rounded-lg border-3 border-[#151515] bg-[#696969]">
        <ClipPreview />
      </div>
      <button aria-label="Show devices" className="ml-[16px] flex h-[33px] w-[34px] items-center justify-center rounded-l bg-[#505050]">
        <svg viewBox="0 0 11 12" className="h-3 w-[11px]">
          <path d="M0 0l11 6-11 6z" fill="#e6e6e6" />
        </svg>
      </button>
      <div className="ml-[2px] flex h-[33px] w-[83px] items-center justify-center bg-[#505050] text-[18px] font-medium text-[#e0e0e0]">DRUMS</div>
      <DeviceChain />
      <svg viewBox="0 0 26 22" className="ml-[30px] h-[22px] w-[26px]" fill="#2a2a2a">
        <path d="M0 7h3v15H0zM7 0h3v22H7zM15 8h3v14h-3zM22 4h3v18h-3z" />
      </svg>
      <Triangle className="ml-[10px] h-[9px] w-[12px] text-[#242424]" />
    </footer>
  );
}

/* ---------- dock ---------- */

const Tile = ({ fill, children }: { fill: string; children?: React.ReactNode }) => (
  <svg viewBox="0 0 54 54" className="h-[54px] w-[54px] overflow-visible">
    <rect width="54" height="54" rx="12" fill={fill} />
    {children}
  </svg>
);

const UI = "Inter, sans-serif";

function DockItem({ label, dot, children }: { label: string; dot?: boolean; children: React.ReactNode }) {
  return (
    <button aria-label={label} className="relative flex h-[79px] w-[70px] shrink-0 items-start justify-center pt-[10px]">
      {children}
      {dot && <i className="absolute bottom-[2px] left-[33px] h-1 w-1 rounded-full bg-black" />}
    </button>
  );
}

const PETALS = ["#f6921e", "#f4d50b", "#a8c837", "#6ab39a", "#66a6dc", "#8f78bd", "#c9649a", "#ee4b3c"];

function Dock() {
  return (
    <div className="mx-auto mt-px mb-[5px] flex h-[81px] rounded-[22px] border border-[#8c918d] bg-[linear-gradient(90deg,#6b696c_0%,#68706b_15%,#657a6d_35%,#5c8066_45%,#66736b_60%,#626963_100%)] px-[2px]">
      <svg width="0" height="0" className="absolute">
        <defs>
          <linearGradient id="green" x2="0" y2="1"><stop stopColor="#5ff777" /><stop offset="1" stopColor="#0cbd2a" /></linearGradient>
          <linearGradient id="blue" x2="0" y2="1"><stop stopColor="#18c0fb" /><stop offset="1" stopColor="#1a63f0" /></linearGradient>
          <linearGradient id="zoom" x2="0" y2="1"><stop stopColor="#0b6cff" /><stop offset="1" stopColor="#0044e0" /></linearGradient>
          <linearGradient id="red" x2="0" y2="1"><stop stopColor="#fb5c74" /><stop offset="1" stopColor="#fa233b" /></linearGradient>
          <linearGradient id="graphite" x2="0" y2="1"><stop stopColor="#57585c" /><stop offset="1" stopColor="#050505" /></linearGradient>
          <linearGradient id="silver" x2="0" y2="1"><stop stopColor="#cfdbe0" /><stop offset="1" stopColor="#9a9894" /></linearGradient>
          <linearGradient id="gold" x2="0" y2="1"><stop stopColor="#ffcf0b" /><stop offset="1" stopColor="#f7a800" /></linearGradient>
          <linearGradient id="lens" x2="0" y2="1"><stop stopColor="#1257d8" /><stop offset="1" stopColor="#2bd4fa" /></linearGradient>
          <linearGradient id="dial" x2="0" y2="1"><stop stopColor="#666566" /><stop offset="1" stopColor="#7b7a7b" /></linearGradient>
        </defs>
      </svg>
      <DockItem label="Finder" dot>
        <Tile fill="url(#blue)">
          <path d="M29 0c-3 10-5 20-5 30h7c0 8 1 16 3 24h8a12 12 0 0 0 12-12V12A12 12 0 0 0 42 0z" fill="#dfe7f0" />
          <path d="M14 15v5M40 15v5" stroke="#1c2b46" strokeWidth="2.500" strokeLinecap="round" />
          <path d="M11 36c9 8 23 8 32 0" stroke="#1c2b46" strokeWidth="2" fill="none" />
        </Tile>
      </DockItem>
      <DockItem label="Safari">
        <Tile fill="#f3f3f3">
          <circle cx="27" cy="27" r="22.500" fill="url(#blue)" />
          <circle cx="27" cy="27" r="20" fill="none" stroke="#fff" strokeWidth="3" strokeDasharray="0.800 2.340" />
          <path d="M42 12L24 24l6 6z" fill="#ff3b30" />
          <path d="M12 42l12-18 6 6z" fill="#fff" />
        </Tile>
      </DockItem>
      <DockItem label="Messages">
        <Tile fill="url(#green)">
          <path d="M27 9c11 0 20 7 20 17s-9 17-20 17c-2 0-4 0-6-1-2 2-4 3-7 3 1-2 2-3 2-6-5-3-9-8-9-13C7 16 16 9 27 9z" fill="#f3fbf3" />
        </Tile>
        <span className="absolute top-[4px] right-[1px] flex h-[26px] w-[26px] items-center justify-center rounded-full bg-[#f5402f] text-[14px] text-white [font-family:Inter,sans-serif]">14</span>
      </DockItem>
      <DockItem label="WhatsApp" dot>
        <div className="flex h-[54px] w-[54px] items-center justify-center rounded-xl bg-linear-to-b from-[#5ff777] to-[#0cbd2a]">
          <FaWhatsapp className="h-[46px] w-[46px] text-white" />
        </div>
      </DockItem>
      <DockItem label="Photos">
        <Tile fill="#ffffff">
          {PETALS.map((c, i) => (
            <ellipse key={c} cx="27" cy="14.500" rx="7" ry="11" fill={c} opacity=".85" transform={`rotate(${i * 45} 27 27)`} />
          ))}
        </Tile>
      </DockItem>
      <DockItem label="Calendar" dot>
        <Tile fill="#f5f3f2">
          <path d="M0 17V12A12 12 0 0 1 12 0h30a12 12 0 0 1 12 12v5z" fill="#f2544e" />
          <text x="27" y="13" textAnchor="middle" fontSize="11" fontWeight="600" fill="#fff" fontFamily={UI}>DEC</text>
          <text x="27" y="44" textAnchor="middle" fontSize="31" fontWeight="300" fill="#222" fontFamily={UI}>24</text>
        </Tile>
      </DockItem>
      <DockItem label="Notes">
        <Tile fill="#f0efec">
          <path d="M0 14v-2A12 12 0 0 1 12 0h30a12 12 0 0 1 12 12v2z" fill="#ffc91a" />
          <path d="M0 16.500h54" stroke="#aaa" strokeDasharray="1.500 1.500" />
          <path d="M0 28h54M0 41h54" stroke="#c9c6c2" />
        </Tile>
      </DockItem>
      <DockItem label="Freeform">
        <Tile fill="#ffffff">
          <circle cx="21" cy="32" r="15" fill="#ff7466" />
          <rect x="18" y="7" width="30" height="29" rx="3" fill="#1ec5f5" opacity=".9" />
          <path d="M8 34c4-3 9-13 12-12s-2 12 1 12 6-13 10-12-3 11 1 12 4-6 8-6c3 0 2 3 7-1" fill="none" stroke="#0c2b57" strokeWidth="3" strokeLinecap="round" />
        </Tile>
      </DockItem>
      <DockItem label="Bitwig Studio">
        <Tile fill="#fa6400">
          {[20, 26.5, 33].map((y, r) =>
            [10, 15, 20, 25, 30, 35, 40, 45].filter((_, i) => (r === 0 ? i > 0 && i < 7 : r === 2 ? i < 2 || i > 5 || i === 3 || i === 4 : true)).map((x) => <circle key={`${x}-${y}`} cx={x - 0.5} cy={y} r="2.400" fill="#fff" />)
          )}
        </Tile>
      </DockItem>
      <DockItem label="Activity Monitor">
        <Tile fill="#b8bdbd">
          <rect x="2" y="2" width="50" height="50" rx="11" fill="#050505" />
          <rect x="6" y="6" width="42" height="42" rx="6" fill="#10211f" />
          <path d="M6 16h42M6 27h42M6 38h42M16 6v42M27 6v42M38 6v42" stroke="#25413d" />
          <path d="M6 28h8l2-20 3 28 2-8h6l3-4 3 6 3-3h10" fill="none" stroke="#79d3c0" strokeWidth="1.500" />
        </Tile>
      </DockItem>
      <DockItem label="Live" dot>
        <Tile fill="#24242c">
          <text x="27" y="36" textAnchor="middle" fontSize="22" fontWeight="600" fill="#fff" fontFamily="Lato, sans-serif">Live</text>
        </Tile>
      </DockItem>
      <DockItem label="Live Suite">
        <svg viewBox="0 0 56 56" className="-mt-px h-[56px] w-[56px]">
          <rect width="56" height="56" rx="2" fill="#1f2121" />
          <text x="28" y="37" textAnchor="middle" fontSize="22" fontWeight="600" fill="#fff" fontFamily="Lato, sans-serif">Live</text>
        </svg>
      </DockItem>
      <DockItem label="Chrome" dot>
        <Tile fill="#ffffff">
          <circle cx="27" cy="27" r="23" fill="#fbc116" />
          <path d="M27 27L7 15.500A23 23 0 0 1 47 15.500H27z" fill="#e8402f" />
          <path d="M7 15.500A23 23 0 0 0 25 50l11-18-9-5z" fill="#2b9f47" />
          <path d="M7 15.500L18 33l9-17.500z" fill="#e8402f" />
          <circle cx="27" cy="27" r="11.500" fill="#fff" />
          <circle cx="27" cy="27" r="9" fill="#3b7ded" />
        </Tile>
      </DockItem>
      <DockItem label="QuickTime Player">
        <Tile fill="url(#graphite)">
          <circle cx="27" cy="27" r="17.500" fill="url(#lens)" stroke="#d6e2ee" strokeWidth="7" />
          <path d="M29 31h8l11 14-8 3z" fill="#c3c9cf" />
        </Tile>
      </DockItem>
      <DockItem label="DaVinci Resolve">
        <Tile fill="#dfe5ea">
          <rect x="2" y="2" width="50" height="50" rx="11" fill="#223244" />
          <path d="M27 27c-9-7-8-15 0-17 8 2 9 10 0 17z" fill="#3fb9e8" />
          <path d="M26 28c-1 11-8 15-14 10-3-8 5-13 14-10z" fill="#bfdc3f" />
          <path d="M28 28c1 11 8 15 14 10 3-8-5-13-14-10z" fill="#f0573f" />
        </Tile>
      </DockItem>
      <DockItem label="Zoom" dot>
        <Tile fill="url(#zoom)">
          <text x="27" y="32" textAnchor="middle" fontSize="15" fontWeight="600" fill="#fff" fontFamily={UI}>zoom</text>
        </Tile>
      </DockItem>
      <DockItem label="Splice" dot>
        <Tile fill="#f7fdfd">
          <g fill="none" strokeWidth="4.500" strokeLinecap="round">
            <path d="M18 34v-5a8 8 0 0 1 8-7h2V15a9 9 0 0 1 18 0v5a9 9 0 0 1-9 9h-9v6a5 5 0 0 1-10 1" stroke="#f0304f" />
            <path d="M37 17v4M26 22h-8a8 8 0 0 0-9 9v6a9 9 0 0 0 19 2v-8a8 8 0 0 1 8-8" stroke="#20d3c4" />
          </g>
        </Tile>
      </DockItem>
      <DockItem label="Audio Hijack" dot>
        <svg viewBox="0 0 62 62" className="-mt-1 h-[62px] w-[62px]">
          <circle cx="31" cy="31" r="31" fill="url(#gold)" />
          <path d="M1 31h6c3 0 3-5 5-5s3 12 5 12 3-22 6-22 4 36 8 36 3-47 0-47-2 42 6 42 4-30 8-30 3 20 6 20 3-6 5-6h6" fill="none" stroke="#fff" strokeWidth="1.800" />
        </svg>
      </DockItem>
      <DockItem label="Discord" dot>
        <div className="flex h-[54px] w-[54px] items-center justify-center rounded-xl bg-linear-to-b from-[#7c86f8] to-[#5662ea]">
          <FaDiscord className="h-[40px] w-[40px] text-white" />
        </div>
      </DockItem>
      <DockItem label="Music" dot>
        <Tile fill="url(#red)">
          <path d="M20 38V14l21-5v25" fill="none" stroke="#fff" strokeWidth="3.500" />
          <path d="M20 13l21-5v6l-21 5z" fill="#fff" />
          <ellipse cx="16.500" cy="39.500" rx="5.500" ry="4.500" fill="#fff" />
          <ellipse cx="37.500" cy="35" rx="5.500" ry="4.500" fill="#fff" />
        </Tile>
      </DockItem>
      <DockItem label="News">
        <Tile fill="#ffffff">
          <path d="M10 11h13l21 27v5H32L10 17z" fill="#f4304f" />
          <path d="M30 11h14v18zM10 25v18h14z" fill="#f4304f" />
        </Tile>
      </DockItem>
      <DockItem label="App Store">
        <Tile fill="url(#blue)">
          <path d="M30 12L16 38M24 12l15 27M9 33h22M36 33h9M14 41l-1 2" stroke="#fff" strokeWidth="4" strokeLinecap="round" />
        </Tile>
      </DockItem>
      <DockItem label="System Settings" dot>
        <Tile fill="url(#silver)">
          <circle cx="27" cy="27" r="21.500" fill="#8f9192" stroke="#3b3c3e" strokeWidth="4" strokeDasharray="1.600 1.200" />
          <circle cx="27" cy="27" r="18" fill="none" stroke="#2f3032" strokeWidth="3" />
          <circle cx="27" cy="27" r="13" fill="none" stroke="#4a4b4d" strokeWidth="2" />
          <path d="M27 27h17M27 27l-8.500-15M27 27l-8.500 15" stroke="#2f3032" strokeWidth="3.500" />
          <circle cx="27" cy="27" r="5" fill="#8f9192" stroke="#2f3032" strokeWidth="3" />
        </Tile>
      </DockItem>
      <DockItem label="iPhone Mirroring">
        <Tile fill="#c9c9c8">
          <rect x="16" y="4" width="22" height="46" rx="5" fill="#111" />
          <rect x="17.500" y="5.500" width="19" height="43" rx="4" fill="#1d6375" />
          <path d="M17.500 32C22 24 28 22 36.500 8a4 4 0 0 0-4-2.500h-11a4 4 0 0 0-4 4z" fill="#e8a089" />
          <path d="M17.500 32C23 24 32 24 36.500 12v4C32 28 22 28 17.500 36z" fill="#f1d8cd" />
        </Tile>
      </DockItem>
      <i className="mx-[15px] my-[10px] w-px bg-[#3c423e]" />
      <DockItem label="Spotify" dot>
        <span className="h-[55px] w-[55px] rounded-full bg-black">
          <FaSpotify className="h-[55px] w-[55px] text-[#1ed760]" />
        </span>
      </DockItem>
      <DockItem label="TotalMix" dot>
        <svg viewBox="0 0 64 66" className="-mt-1.5 h-[66px] w-[64px]">
          <rect width="64" height="66" rx="14" fill="url(#dial)" />
          <circle cx="32" cy="26" r="18" fill="#202122" stroke="#eee" strokeWidth="2" />
          <path d="M32 8a18 18 0 0 1 17 13" stroke="#f05a28" strokeWidth="2.500" fill="none" />
          <path d="M32 27l8-10" stroke="#fff" strokeWidth="2.500" />
          <text x="32" y="60" textAnchor="middle" fontSize="15" fontWeight="700" fill="#e8e8e8" fontFamily={UI}>RME</text>
        </svg>
      </DockItem>
      <DockItem label="Fruit usage monitor" dot>
        <svg viewBox="0 0 66 64" className="-mt-1 h-[64px] w-[66px]">
          <ellipse cx="49" cy="24" rx="11" ry="16" fill="#b88a1e" />
          <path d="M40 16l18 18M40 28l16-16M44 36l14-12" stroke="#7a5510" />
          <path d="M49 12l-9-9 6 2 3-5 3 5 7-2z" fill="#3f9a35" />
          <circle cx="18" cy="28" r="14" fill="#cf3426" />
          <path d="M4 20c4-6 22-6 28 0z" fill="#f1d9c0" />
          <path d="M8 3l6 18" stroke="#e84fb0" strokeWidth="3" />
          <path d="M20 12c3-8 12-7 13-1-4-2-7 0-7 6z" fill="#45b53c" />
          <rect x="0" y="30" width="65" height="15" rx="7" fill="#4a8049" />
          <rect x="0" y="46" width="65" height="16" rx="7" fill="#85393a" />
          <text x="32" y="43" textAnchor="middle" fontSize="14" fontWeight="600" fill="#fff" fontFamily={UI}>76.6%</text>
          <text x="32" y="60" textAnchor="middle" fontSize="14" fontWeight="600" fill="#fff" fontFamily={UI}>3:07</text>
        </svg>
      </DockItem>
      <i className="mx-[15px] my-[10px] w-px bg-[#3c423e]" />
      <DockItem label="Audio files">
        <svg viewBox="0 0 56 62" className="-mt-1 h-[62px] w-[56px]">
          <path d="M5 0h46v10H5z" fill="#d9d9d9" />
          <path d="M2 3h52v10H2z" fill="#e6e6e6" />
          <path d="M0 6h56v56H0z" fill="#ededed" />
          <path d="M23 45V27l15-4v18" fill="none" stroke="#bbb" strokeWidth="3" />
          <circle cx="20" cy="46" r="4.500" fill="#bbb" />
          <circle cx="35" cy="42" r="4.500" fill="#bbb" />
        </svg>
      </DockItem>
      <DockItem label="Screenshots">
        <svg viewBox="0 0 56 38" className="mt-[7px] h-[38px] w-[56px]">
          <path d="M6 0h44v6H6z" fill="#ddd" />
          <path d="M3 4h50v6H3z" fill="#f4f4f4" stroke="#777" strokeWidth=".5" />
          <path d="M0 9h56v28H0z" fill="#f4f4f4" />
          <path d="M2 12h52v22H2z" fill="#2d2e30" />
          <path d="M20 14.500h16M16 22h24" stroke="#888" />
        </svg>
      </DockItem>
      <DockItem label="Recordings">
        <svg viewBox="0 0 56 54" className="h-[54px] w-[56px]">
          <path d="M3 0h50v10H3z" fill="#f4f4f4" />
          <path d="M0 8h56v45H0z" fill="#060606" />
          <path d="M0 23h28v14H0z" fill="#2b2b2b" />
          <path d="M28 23h28v14H28z" fill="#6e6a67" />
          <circle cx="43" cy="28" r="4" fill="#c49a80" />
          <path d="M36 37c0-7 14-7 14 0z" fill="#8d2f37" />
        </svg>
      </DockItem>
      <DockItem label="Trash">
        <svg viewBox="0 0 50 62" className="-mt-1 h-[62px] w-[50px]">
          <path d="M5 10l5-8 8 4 6-6 8 5 6-3 6 9-5 5H8z" fill="#e9ebec" stroke="#777" />
          <path d="M10 4l5 8 6-7 8 8 6-8" stroke="#3f5d7a" strokeWidth="1.500" fill="none" />
          <path d="M2 10c12 5 34 5 46 0l-6 46c-1 7-33 7-34 0z" fill="#d3d7d8" />
          <path d="M8 18l6 36M20 20l2 38M32 20l-2 38M42 18l-7 36" stroke="#c3c8ca" strokeWidth="2" />
        </svg>
      </DockItem>
    </div>
  );
}

export default function App() {
  return (
    <div className="flex min-h-screen flex-col bg-[linear-gradient(180deg,#000_0%,#020503_95%,#06150b_100%)] text-[#e0e0e0] [font-family:Roboto,sans-serif]">
      <MenuBar />
      <main className="flex flex-1 flex-col rounded-[10px] border border-[#6a6a6a] bg-[#393939]">
        <div className="relative flex h-[29px] items-center justify-center [font-family:Inter,sans-serif]">
          <div className="absolute top-[7px] left-[7px] flex gap-2">
            <button aria-label="Close" className="flex h-3 w-3 items-center justify-center rounded-full bg-[#ff5f57]">
              <i className="h-1 w-1 rounded-full bg-[#7a0d08]" />
            </button>
            <button aria-label="Minimize" className="h-3 w-3 rounded-full bg-[#febc2e]" />
            <button aria-label="Full screen" className="h-3 w-3 rounded-full bg-[#28c840]" />
          </div>
          <h1 className="pb-[2px] pl-[18px] text-[13px] font-semibold text-[#a9a9a9]">Can You Feel It</h1>
        </div>
        <Transport />
        <div className="mt-[22px] flex pr-[13px] pl-[14px]">
          <BrowserStrip />
          <Overview />
        </div>
        <div className="mx-[11px] mt-[11px] flex flex-1 overflow-hidden rounded-[10px] border-4 border-[#171717] text-[18px] font-medium">
          <aside className="flex w-[589px] shrink-0 flex-col bg-[#505050]">
            <div className="flex h-[31px] items-center border-b-2 border-[#2f2f2f] bg-[#00c0b1] pl-[7px] text-[#10302d]">
              <button aria-label="Clip active" className="h-[17px] w-4 border-2 border-[#1a1a1a] bg-[#ff9f39]" />
              <h2 className="pl-[6px]">Clip</h2>
            </div>
            <div className="flex flex-1">
              <ClipColumn />
              <i className="w-px bg-[#2f2f2f]" />
              <ToolsColumn />
            </div>
          </aside>
          <i className="w-1 bg-[#2c2c2c]" />
          <PianoRoll />
        </div>
        <div className="pt-[9px] pb-[12px]">
          <StatusBar />
        </div>
      </main>
      <Dock />
    </div>
  );
}
